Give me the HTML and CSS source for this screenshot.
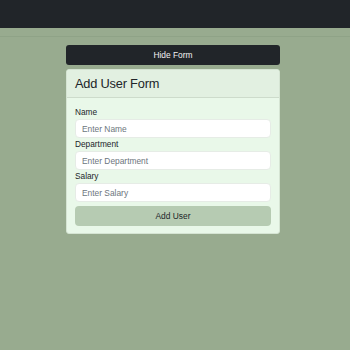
FILE: index.html
```html
<!DOCTYPE html>
<html lang="en">
<head>
    <meta charset="UTF-8">
    <title>Users</title>
    <link rel="stylesheet" href="styles.css">
</head>
<body>
    <nav class="navbar"></nav>
    <div class="divider"></div>

    <div class="main">
        <button class="toggle-btn">Hide Form</button>

        <div class="card">
            <div class="card-header">Add User Form</div>
            <form class="card-body">
                <label for="name">Name</label>
                <input type="text" id="name" placeholder="Enter Name">

                <label for="department">Department</label>
                <input type="text" id="department" placeholder="Enter Department">

                <label for="salary">Salary</label>
                <input type="text" id="salary" placeholder="Enter Salary">

                <button type="button" class="submit-btn">Add User</button>
            </form>
        </div>
    </div>
</body>
</html>
```

FILE: styles.css
```css
body {
    font-family: 'Liberation Sans', Arial, sans-serif;
    background-color: #98ab8f;
    color: #212529;
    margin: 0;
    padding: 0;
}

.navbar {
    height: 28px;
    background-color: #212529;
}

.divider {
    height: 1px;
    margin-top: 8px;
    background-color: #8fa387;
}

.main {
    width: 214px;
    margin: 8px auto 0;
    padding-right: 4px;
}

.toggle-btn {
    display: block;
    width: 100%;
    height: 20px;
    border: none;
    border-radius: 3px;
    background-color: #212529;
    color: #f1f1f1;
    font-family: inherit;
    font-size: 8.4px;
    cursor: pointer;
}

.card {
    margin-top: 4px;
    background-color: #e9f8e9;
    border: 1px solid #d5e4d3;
    border-radius: 3px;
    overflow: hidden;
}

.card-header {
    height: 27px;
    line-height: 28px;
    padding: 0 8px;
    font-size: 12.8px;
    letter-spacing: -0.2px;
    background-color: #e2f0e1;
    border-bottom: 1px solid #cddbcb;
}

.card-body {
    display: flex;
    flex-direction: column;
    padding: 9px 8px 7px;
}

label {
    font-size: 8.3px;
    line-height: 11px;
    margin-bottom: 1px;
}

input {
    height: 19px;
    box-sizing: border-box;
    border: 1px solid #e6ece6;
    border-radius: 4px;
    background: white;
    padding: 0 6px;
    margin-bottom: 1px;
    font-family: inherit;
    font-size: 8.4px;
}

input::placeholder {
    color: #6c757d;
}

.submit-btn {
    height: 20px;
    margin-top: 3px;
    border: none;
    border-radius: 4px;
    background-color: #b6cbb2;
    color: #212529;
    font-family: inherit;
    font-size: 8.4px;
    cursor: pointer;
}
```
